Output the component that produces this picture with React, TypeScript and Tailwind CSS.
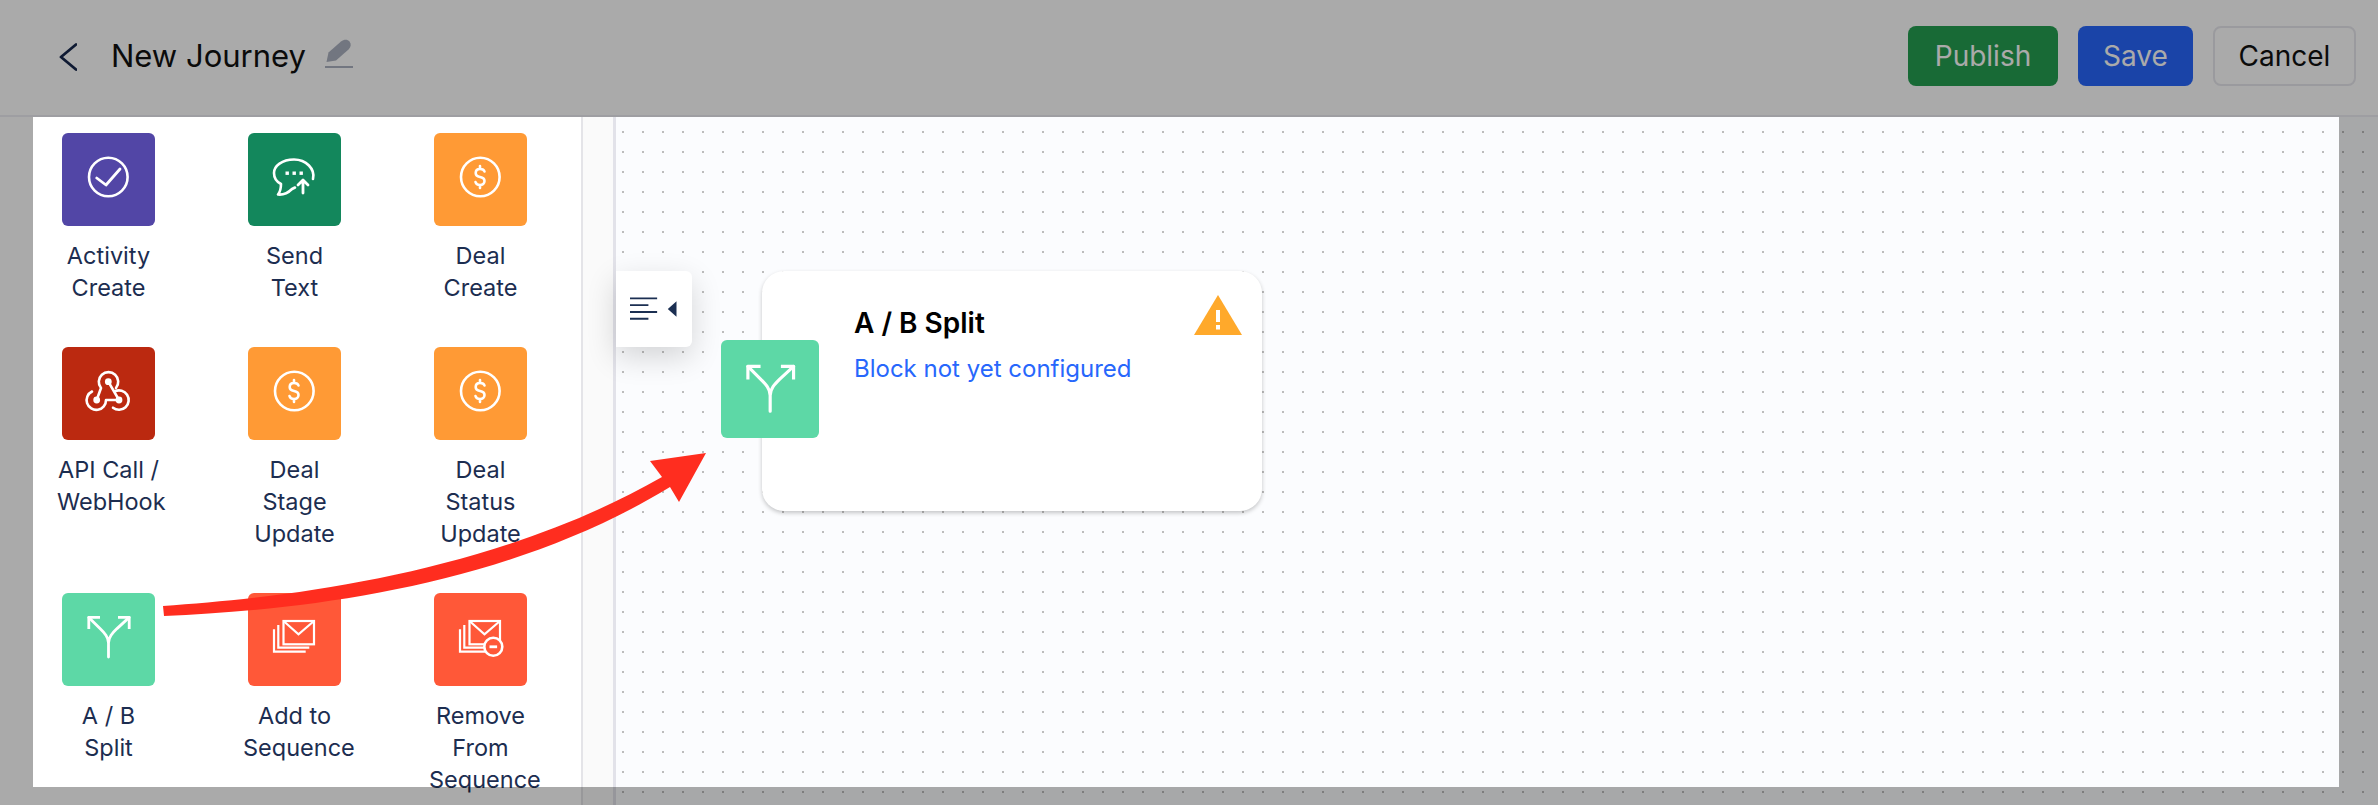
import React from "react";

const W = "#ffffff";

function Svg({ children, view = "0 0 93 93" }: { children: React.ReactNode; view?: string }) {
  return (
    <svg viewBox={view} className="w-full h-full" fill="none" stroke={W} strokeWidth={2.6} strokeLinecap="round" strokeLinejoin="round">
      {children}
    </svg>
  );
}

const Check = () => (
  <Svg>
    <circle cx="46.3" cy="44" r="19.3" />
    <polyline points="34.7,45 44,52 58,36" strokeWidth={2.8} />
  </Svg>
);

const Chat = () => (
  <Svg>
    <path d="M65 46 C67.5 36 58 26.5 46 26.5 C34 26.5 26 33 26 40 C26 45 29 49 33 51 C33 55 32 59 30 61.5 C35 62 40 60 44 56 L47 54.5" />
    <path d="M55 60 V47.5 M50 52 L55 47 L60 52" strokeWidth={2.8} />
    <g fill={W} stroke="none">
      <rect x="37.5" y="38.5" width="3.4" height="3.4" />
      <rect x="44.5" y="38.5" width="3.4" height="3.4" />
      <rect x="51.5" y="38.5" width="3.4" height="3.4" />
    </g>
  </Svg>
);

const Dollar = () => (
  <Svg>
    <circle cx="46.3" cy="44" r="19.3" />
    <path d="M50.5 38.5 C50 36.7 48 36 46 36 C43.5 36 41.7 37.5 41.7 40 C41.7 42.5 43.5 43.5 46 44 C48.7 44.5 50.5 45.5 50.5 48 C50.5 50.5 48.5 52 46 52 C43.5 52 42 51 41.5 49 M46 33 V36 M46 52 V55" />
  </Svg>
);

const Hook = () => (
  <Svg>
    <path d="M34.7 53 L39 41 A9.7 9.7 0 1 1 54 41" />
    <path d="M46.3 34.7 L57 53" />
    <path d="M30 44.5 A9.7 9.7 0 1 0 44 53 L57 53" />
    <path d="M53 44.2 A9.7 9.7 0 1 1 51 60.7" />
    <g fill={W} stroke="none">
      <circle cx="46.3" cy="34.7" r="3.4" />
      <circle cx="34.7" cy="53" r="3.4" />
      <circle cx="57" cy="53" r="3.4" />
    </g>
  </Svg>
);

const Split = ({ view }: { view?: string }) => (
  <Svg view={view}>
    <path d="M46.5 64 V50 C46.5 44 42.5 40 38 35.6 L26.8 24.4 M46.5 50 C46.5 44 50.5 40 55 35.6 L67.2 24.4" strokeWidth={2.8} />
    <path d="M38 24.4 H26.8 V36 M56 24.4 H67.2 V36" strokeWidth={2.8} strokeLinecap="butt" />
  </Svg>
);

const Mail = ({ minus }: { minus?: boolean }) => (
  <Svg>
    <g strokeLinecap="butt" strokeLinejoin="miter" strokeWidth={2.2}>
      <rect x="35.5" y="28" width="30.5" height="23.3" />
      <path d="M35.5 28 L50.5 41.3 L66 28" />
      <path d="M30.3 32 V54.7 H61.3" />
      <path d="M26 36.3 V58.7 H57.7" />
    </g>
    {minus && (
      <>
        <circle cx="59.3" cy="53.7" r="9" fill="#ff5838" strokeWidth={2.6} />
        <rect x="55.5" y="52.4" width="7.6" height="2.8" fill={W} stroke="none" />
      </>
    )}
  </Svg>
);

const items: { label: string[]; bg: string; icon: React.ReactNode }[] = [
  { label: ["Activity", "Create"], bg: "bg-[#5246a6]", icon: <Check /> },
  { label: ["Send", "Text"], bg: "bg-[#13875c]", icon: <Chat /> },
  { label: ["Deal", "Create"], bg: "bg-[#ff9a35]", icon: <Dollar /> },
  { label: ["API Call /", "WebHook"], bg: "bg-[#bb2910]", icon: <Hook /> },
  { label: ["Deal", "Stage", "Update"], bg: "bg-[#ff9a35]", icon: <Dollar /> },
  { label: ["Deal", "Status", "Update"], bg: "bg-[#ff9a35]", icon: <Dollar /> },
  { label: ["A / B", "Split"], bg: "bg-[#5dd8a6]", icon: <Split /> },
  { label: ["Add to", "Sequence"], bg: "bg-[#ff5838]", icon: <Mail /> },
  { label: ["Remove", "From", "Sequence"], bg: "bg-[#ff5838]", icon: <Mail minus /> },
];

export default function App() {
  return (
    <div className="relative w-[2378px] h-[805px] overflow-hidden bg-white font-[family-name:Inter,sans-serif]">
      <header className="h-[117px] border-b-2 border-[#eeeef4] bg-white flex items-center justify-between pl-[59px] pr-[22px] pb-[4px]">
        <div className="flex items-center">
          <svg viewBox="0 0 18 28" className="w-[18px] h-[28px] mt-[3px]" fill="none" stroke="#17284d" strokeWidth={2.8} strokeLinecap="round" strokeLinejoin="round">
            <polyline points="17,1.5 2,14 17,26.5" />
          </svg>
          <h1 className="ml-[34px] text-[31px] leading-[40px] text-[#111] font-normal">New Journey</h1>
          <svg viewBox="0 0 28 29" className="ml-[19px] w-[28px] h-[29px] -mt-[5px]" fill="#acb2c0">
            <path d="M1.5 23 L3.5 13.5 L16 2.5 C19 0 22.5 0 24.5 2.5 C26.5 5 26 8 23.5 10.5 L11 21.5 Z" />
            <rect x="0" y="27" width="28" height="2" />
          </svg>
        </div>
        <div className="flex items-center gap-[20px]">
          <button className="w-[150px] h-[60px] rounded-[8px] bg-[#25a052] text-white text-[28px]">Publish</button>
          <button className="w-[115px] h-[60px] rounded-[8px] bg-[#2767fc] text-white text-[28px]">Save</button>
          <button className="w-[143px] h-[60px] rounded-[8px] border-2 border-[#e8e8ee] text-[#111] text-[28px]">Cancel</button>
        </div>
      </header>

      <div className="flex h-[688px]">
        <aside className="w-[583px] shrink-0 border-r-2 border-[#e4e4e8] bg-white pl-[57px] pt-[16px]">
          <div className="grid grid-cols-[103px_103px_103px] gap-x-[83px] gap-y-[43px]">
            {items.map((it, i) => (
              <div key={i} className="w-[103px]">
                <div className={`mx-[5px] w-[93px] h-[93px] rounded-[6px] ${it.bg}`}>{it.icon}</div>
                <div className="mt-[14px] text-center text-[23.5px] leading-[32px] text-[#1c2d50]">
                  {it.label.map((l) => (
                    <div key={l}>{l}</div>
                  ))}
                </div>
              </div>
            ))}
          </div>
        </aside>
        <div className="w-[33px] shrink-0 bg-[#fafafa] border-r-[3px] border-[#e2e2e9]" />
        <main className="relative flex-1 bg-[#fbfcfe] bg-[radial-gradient(#bcbcbc_1px,transparent_1px)] bg-size-[20px_20px] bg-position-[-3px_5px]">
          <div className="absolute left-0 top-[154px] w-[76px] h-[76px] rounded-r-[6px] bg-white shadow-[0_10px_30px_rgba(0,0,0,0.16)] flex items-center">
            <svg viewBox="0 0 64 24" className="ml-[14px] w-[64px] h-[24px]" fill="none" stroke="#1b2f52" strokeWidth={2}>
              <path d="M0 1 H28 M0 8 H19 M0 15 H28 M0 22 H19" />
              <path d="M39 12 L48 4 V20 Z" fill="#1b2f52" stroke="none" />
            </svg>
          </div>
          <div className="absolute left-[146px] top-[154px] w-[500px] h-[240px] rounded-[22px] bg-white shadow-[0_2px_4px_rgba(0,0,0,0.22)] pl-[92px] pt-[34px]">
            <h2 className="text-[28px] leading-[36px] font-semibold text-black">A / B Split</h2>
            <p className="mt-[12px] text-[24px] leading-[32px] text-[#2767fc]">Block not yet configured</p>
            <svg viewBox="0 0 48 40" className="absolute right-[20px] top-[24px] w-[48px] h-[40px]">
              <path d="M24 0 L48 40 H0 Z" fill="#ffa92b" />
              <rect x="22" y="15" width="4" height="12" fill="#fff" />
              <rect x="22" y="30" width="4" height="4.5" fill="#fff" />
            </svg>
          </div>
          <div className="absolute left-[105px] top-[223px] w-[98px] h-[98px] rounded-[6px] bg-[#5dd8a6]">
            <Split view="3 1 86.7 86.7" />
          </div>
        </main>
      </div>

      <div className="absolute left-[33px] top-[117px] w-[2306px] h-[670px] shadow-[0_0_0_3000px_rgba(0,0,0,0.333)] pointer-events-none" />

      <svg viewBox="0 0 2378 805" className="absolute inset-0 w-[2378px] h-[805px] pointer-events-none">
        <path d="M163 606 C300 597 500 570 662 477 L650 461 L706 453 L679 502 L670 487 C510 585 310 610 164 616 Z" fill="#ff2d1f" />
      </svg>
    </div>
  );
}
